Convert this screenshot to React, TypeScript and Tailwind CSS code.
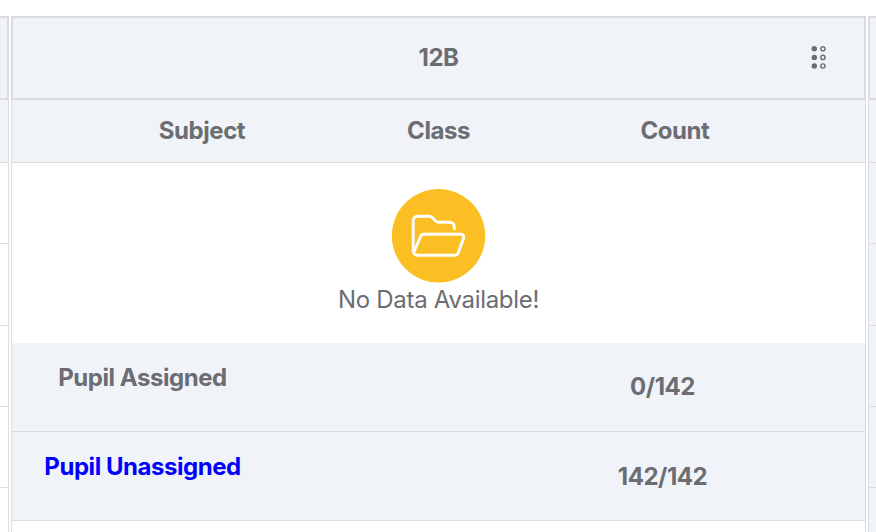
import clsx from "clsx";

const classGroup = {
  name: "12B",
  headings: ["Subject", "Class", "Count"],
  summary: [
    { label: "Pupil Assigned", count: "0/142", link: false },
    { label: "Pupil Unassigned", count: "142/142", link: true },
  ],
};

const sideRows = [1, 2, 3, 4, 5];

function DragHandle() {
  return (
    <svg className="h-6 w-[15px]" viewBox="0 0 15 24" fill="none">
      {[2.8, 11.4, 20].map((y) => (
        <g key={y}>
          <circle cx="3.3" cy={y} r="2.7" fill="#6b6d72" />
          <circle cx="11.9" cy={y} r="2.1" stroke="#6b6d72" strokeWidth="1.4" />
        </g>
      ))}
    </svg>
  );
}

function FolderIcon() {
  return (
    <svg
      className="size-[94px]"
      viewBox="0.5 0 94 94"
      fill="none"
      stroke="#fff"
      strokeWidth="2.9"
      strokeLinejoin="round"
    >
      <circle cx="47" cy="46.8" r="46.7" fill="#fbbf24" stroke="none" />
      <path
        transform="translate(-0.5 0)"
        d="M63.3 41v-3.2a4.5 4.5 0 0 0-4.5-4.5H48.3c-1.7 0-2.7-.5-3.8-1.6l-2.9-2.8c-1-1-2-1.6-3.6-1.6H26.7a4.5 4.5 0 0 0-4.5 4.5v29.9a4.5 4.5 0 0 0 4.5 4.5h37.6c1.4 0 2.3-.7 2.8-2l5.3-14.5c.8-2.3-.1-4.5-2.4-4.5H32.6c-1.5 0-2.4.7-2.9 2L23 62.8"
      />
    </svg>
  );
}

function SideColumn({ className, rowClassName }: { className: string; rowClassName?: string }) {
  return (
    <div className={clsx("shrink-0", className)}>
      <div className="h-[84px] border-2 border-[#dcdcdc] bg-[#f0f3f8]" />
      <div className="h-[63px] border-x border-b border-[#dcdcdc] bg-[#f0f3f8]" />
      {sideRows.map((row) => (
        <div
          key={row}
          className={clsx("h-[81.25px] border-x border-b border-[#dcdcdc]", rowClassName)}
        />
      ))}
    </div>
  );
}

export default function App() {
  return (
    <div className="h-[532px] w-[876px] overflow-hidden bg-white pt-4 font-['Inter',sans-serif] text-2xl tracking-[-0.46px] text-[#6b6d72]">
      <div className="flex gap-0.5">
        <SideColumn className="-ml-10 w-[49px]" />

        <div className="w-[855px] shrink-0">
          <div className="grid h-[84px] grid-cols-[1fr_auto_1fr] items-center border-2 border-[#dcdcdc] bg-[#f0f3f8] px-[38px]">
            <span className="col-start-2 font-[650]">{classGroup.name}</span>
            <div className="justify-self-end">
              <DragHandle />
            </div>
          </div>

          <div className="h-[432px] border-x border-[#dcdcdc]">
            <div className="flex h-[63px] justify-center border-b border-[#dcdcdc] bg-[#f0f3f8]">
              {classGroup.headings.map((heading) => (
                <div
                  key={heading}
                  className="flex w-[236.5px] items-center justify-center font-[650]"
                >
                  {heading}
                </div>
              ))}
            </div>

            <div className="flex h-[180px] flex-col items-center pt-[26px]">
              <FolderIcon />
              <p className="leading-[34px] tracking-[-0.3px]">No Data Available!</p>
            </div>

            {classGroup.summary.map((item) => (
              <div
                key={item.label}
                className="flex h-[89px] justify-between border-b border-[#dcdcdc] bg-[#f0f3f8] font-[650]"
              >
                <div
                  className={clsx(
                    "w-[261px] pt-[19px] text-center",
                    item.link && "text-[#0000ff]",
                  )}
                >
                  {item.label}
                </div>
                <div
                  className={clsx(
                    "flex w-[405px] items-center justify-center",
                    item.link && "pt-0.5",
                  )}
                >
                  {item.count}
                </div>
              </div>
            ))}
          </div>
        </div>

        <SideColumn className="w-12" rowClassName="bg-[#f0f3f8]" />
      </div>
    </div>
  );
}
